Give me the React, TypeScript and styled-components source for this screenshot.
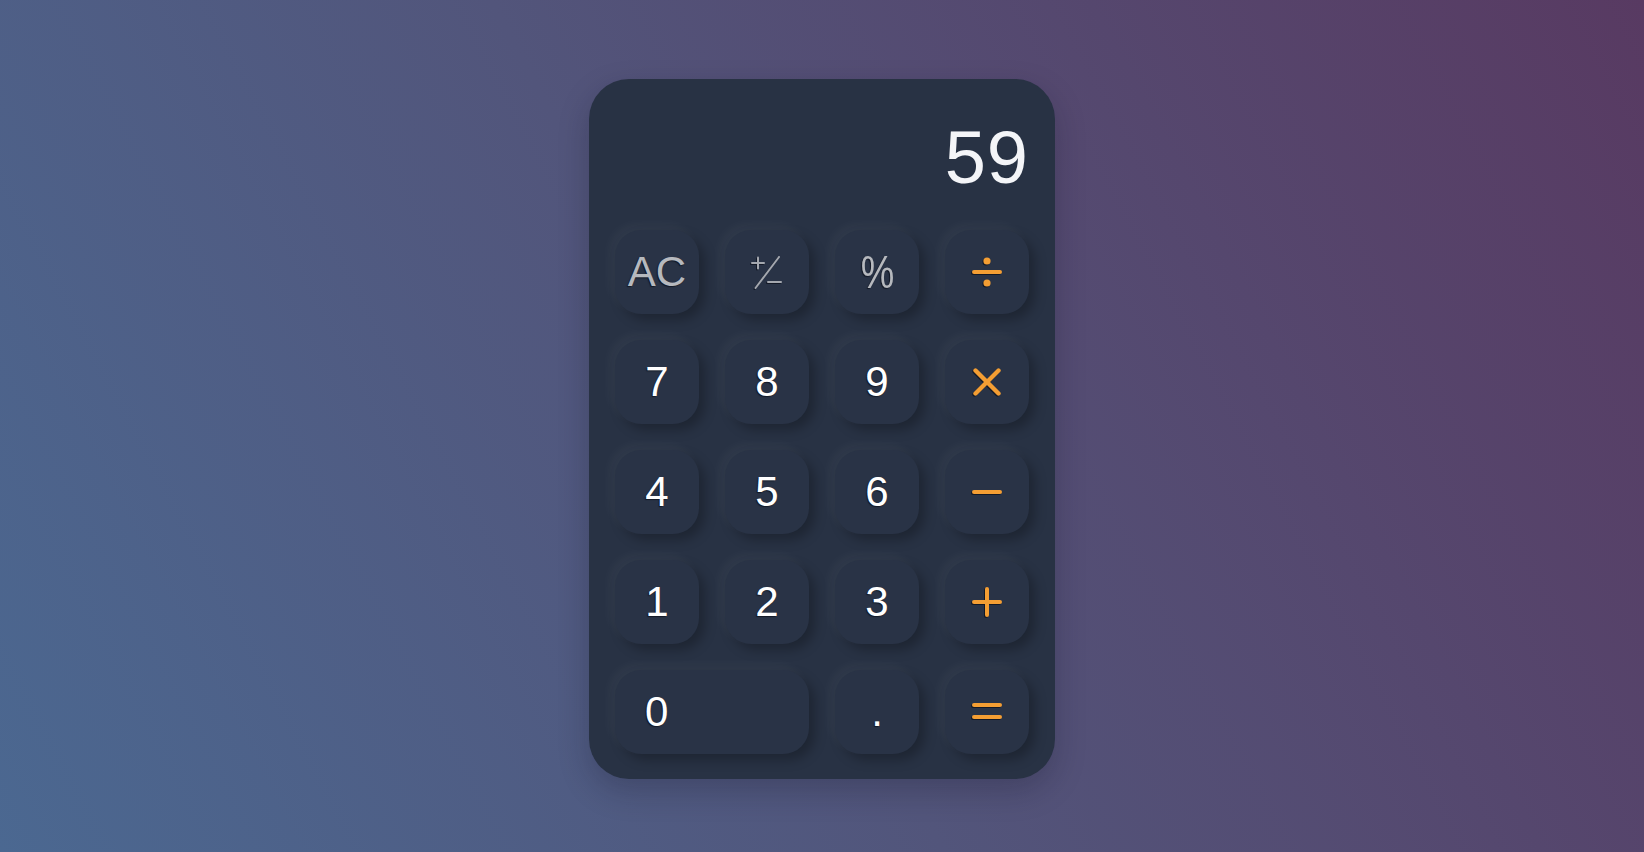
import { createGlobalStyle, styled } from "styled-components";

const GlobalStyle = createGlobalStyle`
  * {
    box-sizing: border-box;
  }
  body {
    margin: 0;
    font-family: "Liberation Sans", Arial, sans-serif;
  }
`;

const Page = styled.main`
  min-height: 100vh;
  padding-top: 6px;
  display: flex;
  align-items: center;
  justify-content: center;
  background: linear-gradient(62deg, #4b6891 0%, #52557b 45%, #583a62 100%);
`;

const Calculator = styled.div`
  width: 466px;
  padding: 26px 26px 25px;
  border-radius: 40px;
  background-color: #283244;
  box-shadow: 0 12px 30px rgba(20, 20, 40, 0.25);
`;

const Display = styled.div`
  height: 99px;
  margin-bottom: 26px;
  padding-bottom: 9px;
  display: flex;
  align-items: flex-end;
  justify-content: flex-end;
  color: #f4f5f8;
  font-size: 74px;
  line-height: 1;
  letter-spacing: 1px;
`;

const Keys = styled.div`
  display: grid;
  grid-template-columns: repeat(4, 84px);
  grid-auto-rows: 84px;
  gap: 26px;
`;

type Tone = "digit" | "func" | "op";

const toneColor: Record<Tone, string> = {
  digit: "#ffffff",
  func: "#b6b9be",
  op: "#f49e33",
};

const Key = styled.button<{ $tone: Tone; $wide?: boolean }>`
  grid-column: ${(props) => (props.$wide ? "span 2" : "auto")};
  display: flex;
  align-items: center;
  justify-content: ${(props) => (props.$wide ? "flex-start" : "center")};
  padding: ${(props) => (props.$wide ? "0 0 0 30px" : "0")};
  border: none;
  border-radius: 26px;
  background-color: #293346;
  color: ${(props) => toneColor[props.$tone]};
  font-family: "Liberation Sans", Arial, sans-serif;
  font-size: 42px;
  line-height: 1;
  text-shadow: -1px 1px 1px rgba(10, 14, 24, 0.7);
  box-shadow: -5px -5px 12px rgba(255, 255, 255, 0.045),
    6px 6px 12px rgba(0, 0, 0, 0.26);
  cursor: pointer;

  svg {
    display: block;
    filter: drop-shadow(-1px 1px 0.6px rgba(10, 14, 24, 0.7));
  }
`;

const Percent = styled.span`
  display: inline-block;
  font-size: 46px;
  transform: scaleX(0.82);
`;

const ORANGE = "#f49e33";

function PlusMinus() {
  return (
    <svg width="40" height="40" viewBox="0 0 40 40" fill="none" stroke="#a4a8af" strokeWidth="2" strokeLinecap="round">
      <line x1="5" y1="11" x2="17" y2="11" />
      <line x1="11" y1="5.5" x2="11" y2="16.5" />
      <line x1="32" y1="5" x2="8.5" y2="36" />
      <line x1="21" y1="30" x2="34" y2="30" />
    </svg>
  );
}

function Divide() {
  return (
    <svg width="30" height="30" viewBox="0 0 30 30" fill={ORANGE} stroke={ORANGE} strokeWidth="4" strokeLinecap="round">
      <line x1="2" y1="15" x2="28" y2="15" />
      <circle cx="15" cy="4" r="1.6" />
      <circle cx="15" cy="26" r="1.6" />
    </svg>
  );
}

function Times() {
  return (
    <svg width="30" height="30" viewBox="0 0 30 30" fill="none" stroke={ORANGE} strokeWidth="4.4" strokeLinecap="round">
      <line x1="3.5" y1="3.5" x2="26.5" y2="26.5" />
      <line x1="26.5" y1="3.5" x2="3.5" y2="26.5" />
    </svg>
  );
}

function Minus() {
  return (
    <svg width="30" height="30" viewBox="0 0 30 30" fill="none" stroke={ORANGE} strokeWidth="4" strokeLinecap="round">
      <line x1="2" y1="15" x2="28" y2="15" />
    </svg>
  );
}

function Plus() {
  return (
    <svg width="30" height="30" viewBox="0 0 30 30" fill="none" stroke={ORANGE} strokeWidth="4" strokeLinecap="round">
      <line x1="2" y1="15" x2="28" y2="15" />
      <line x1="15" y1="2" x2="15" y2="28" />
    </svg>
  );
}

function Equals() {
  return (
    <svg width="30" height="30" viewBox="0 0 30 30" fill="none" stroke={ORANGE} strokeWidth="4" strokeLinecap="round">
      <line x1="2" y1="8" x2="28" y2="8" />
      <line x1="2" y1="20" x2="28" y2="20" />
    </svg>
  );
}

export default function App() {
  return (
    <Page>
      <GlobalStyle />
      <Calculator>
        <Display>59</Display>
        <Keys>
          <Key $tone="func">AC</Key>
          <Key $tone="func" aria-label="plus minus">
            <PlusMinus />
          </Key>
          <Key $tone="func">
            <Percent>%</Percent>
          </Key>
          <Key $tone="op" aria-label="divide">
            <Divide />
          </Key>

          <Key $tone="digit">7</Key>
          <Key $tone="digit">8</Key>
          <Key $tone="digit">9</Key>
          <Key $tone="op" aria-label="multiply">
            <Times />
          </Key>

          <Key $tone="digit">4</Key>
          <Key $tone="digit">5</Key>
          <Key $tone="digit">6</Key>
          <Key $tone="op" aria-label="minus">
            <Minus />
          </Key>

          <Key $tone="digit">1</Key>
          <Key $tone="digit">2</Key>
          <Key $tone="digit">3</Key>
          <Key $tone="op" aria-label="plus">
            <Plus />
          </Key>

          <Key $tone="digit" $wide>
            0
          </Key>
          <Key $tone="digit">.</Key>
          <Key $tone="op" aria-label="equals">
            <Equals />
          </Key>
        </Keys>
      </Calculator>
    </Page>
  );
}
